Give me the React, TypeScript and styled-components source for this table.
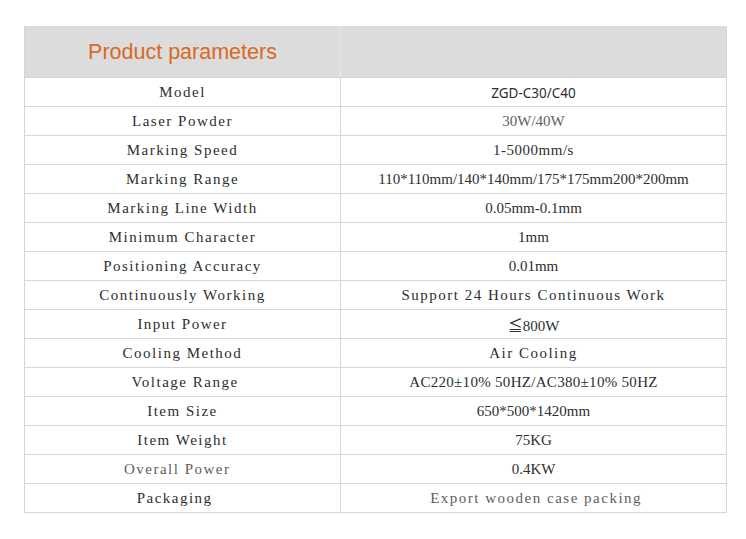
import React from "react";
import styled, { createGlobalStyle } from "styled-components";

const Global = createGlobalStyle`
  html, body { margin: 0; padding: 0; background: #ffffff; }
  body { width: 746px; height: 539px; overflow: hidden; }
`;

const Page = styled.div`
  padding: 26px 0 0 24px;
`;

const Table = styled.div`
  display: grid;
  grid-template-columns: 316px 386px;
  width: 703px;
  border-left: 1px solid #d6d6d6;
`;

const HeadCell = styled.div<{ $last?: boolean }>`
  box-sizing: border-box;
  height: 52px;
  background: #dcdcdc;
  border-bottom: 1px solid #d2d2d2;
  border-right: 1px solid ${(p) => (p.$last ? "#d6d6d6" : "#e6e6e6")};
  display: flex;
  align-items: center;
  justify-content: center;
`;

const Title = styled.span`
  font-family: "Liberation Sans", Arial, sans-serif;
  font-size: 21.5px;
  color: #d8691f;
  padding-top: 1px;
`;

const Cell = styled.div<{ $muted?: boolean; $sans?: boolean; $ls?: number }>`
  height: 29px;
  box-sizing: border-box;
  border-right: 1px solid #d6d6d6;
  border-bottom: 1px solid #d6d6d6;
  display: flex;
  align-items: center;
  justify-content: center;
  white-space: pre;
  font-family: ${(p) =>
    p.$sans
      ? `"Noto Sans", "Open Sans", sans-serif`
      : `"Liberation Serif", "Noto Sans CJK SC", serif`};
  font-size: ${(p) => (p.$sans ? "13.5px" : "15px")};
  letter-spacing: ${(p) => (p.$sans ? 0 : p.$ls ?? 1.5)}px;
  color: ${(p) => (p.$muted ? "#5e5e5e" : "#2e2e2e")};
  padding-top: 1px;
`;

type Row = {
  label: string;
  value: string;
  muted?: boolean;
  sans?: boolean;
  labelMuted?: boolean;
  ls?: number;
};

const rows: Row[] = [
  { label: "Model", value: "ZGD-C30/C40", sans: true },
  { label: "Laser Powder", value: "30W/40W", muted: true, ls: 0 },
  { label: "Marking Speed", value: "1-5000mm/s", ls: 0.5 },
  { label: "Marking Range", value: "110*110mm/140*140mm/175*175mm200*200mm", ls: 0 },
  { label: "Marking Line Width", value: "0.05mm-0.1mm", ls: 0 },
  { label: "Minimum Character", value: "1mm", ls: 0 },
  { label: "Positioning Accuracy", value: "0.01mm", ls: 0 },
  { label: "Continuously Working", value: "Support 24 Hours Continuous Work" },
  { label: "Input Power", value: "≦800W", ls: 0 },
  { label: "Cooling Method", value: "Air Cooling" },
  { label: " Voltage Range", value: "AC220±10% 50HZ/AC380±10% 50HZ", ls: 0.3 },
  { label: "Item Size", value: "650*500*1420mm", ls: 0 },
  { label: "Item Weight", value: "75KG", ls: 0 },
  { label: "Overall Power  ", value: "0.4KW", labelMuted: true, ls: 0 },
  { label: "Packaging   ", value: " Export wooden case packing", muted: true },
];

export default function App() {
  return (
    <>
      <Global />
      <Page>
        <Table>
          <HeadCell>
            <Title>Product parameters</Title>
          </HeadCell>
          <HeadCell $last />
          {rows.map((r) => (
            <React.Fragment key={r.label}>
              <Cell $muted={r.labelMuted}>{r.label}</Cell>
              <Cell $muted={r.muted} $sans={r.sans} $ls={r.ls}>
                {r.value}
              </Cell>
            </React.Fragment>
          ))}
        </Table>
      </Page>
    </>
  );
}
